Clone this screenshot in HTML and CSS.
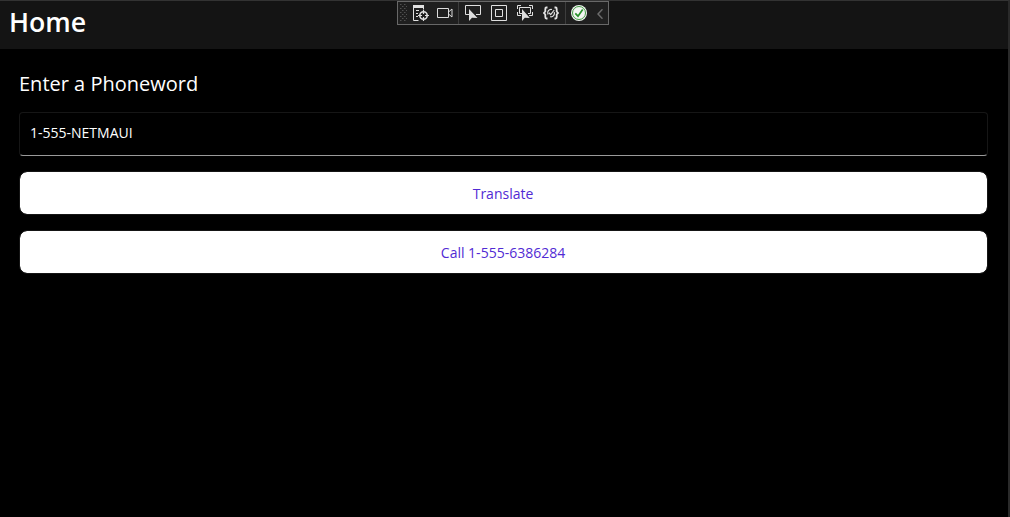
FILE: index.html
```html
<!DOCTYPE html>
<html lang="en">
<head>
<meta charset="utf-8">
<title>Home</title>
<link rel="stylesheet" href="styles.css">
</head>
<body>
<div class="window">
  <header class="titlebar"><h1>Home</h1></header>
  <main class="content">
    <label class="prompt" for="phoneword">Enter a Phoneword</label>
    <div class="entry" id="phoneword">1-555-NETMAUI</div>
    <button class="button">Translate</button>
    <button class="button">Call 1-555-6386284</button>
  </main>
  <div class="debugbar">
    <svg class="grip" width="7" height="18" viewBox="0 0 7 18"><g stroke="#505050" stroke-dasharray="1.5 2.5"><path d="M0 .5h7M0 4.500h7M0 8.500h7M0 12.500h7M0 16.500h7"/><path d="M2 2.500h5M2 6.500h5M2 10.500h5M2 14.500h5"/></g></svg>
    <svg class="icon tree" viewBox="0 0 16 16"><path fill="#e0e0e0" d="M0 0h11v3H0z"/><path d="M.5 3v12.500h5M10.500 3v1.500M3 5.500h3M3 8.500h2M3 11.500h2" fill="none" stroke="#e0e0e0"/><circle cx="10.500" cy="10.500" r="3.700" fill="none" stroke="#e0e0e0" stroke-width="1.600"/><path d="M10.500 5v4M10.500 12v4M5 10.500h4M12 10.500h4" stroke="#e0e0e0" stroke-width="1.200"/></svg>
    <svg class="icon camera" viewBox="0 0 16 16"><path d="M.5 3.500h11v9H.500zM11.500 7l3.500-3v8l-3.500-3" fill="none" stroke="#dcdcdc"/></svg>
    <i class="divider"></i>
    <svg class="icon select" viewBox="0 0 16 16"><path d="M4 9.500H.500v-9h15v9H11" fill="none" stroke="#e0e0e0"/><path fill="#dedede" d="M4 4v12l3-3.200 5.500.2z"/></svg>
    <svg class="icon layout" viewBox="0 0 16 16"><path d="M.5.500h15v15H.500zM4.500 4.500h7v7h-7z" fill="none" stroke="#e0e0e0"/></svg>
    <svg class="icon focus" viewBox="0 0 16 16"><path d="M.5 4V.500H4M12 .500h3.500V4M.500 7v3.500H4M12 10.500h3.500V7M5 8.500H2.500v-6h11v6H11" fill="none" stroke="#e0e0e0"/><path fill="#dedede" d="M5 4v12l2.800-3.200 5 .2z"/></svg>
    <svg class="icon reload" viewBox="0 0 16 16"><path d="M4.500 2.500H3.300Q2.300 2.500 2.300 4v2.500L1 8l1.300 1.500V12q0 1.500 1 1.500h1.200M11.500 2.500h1.200q1 0 1 1.500v2.500L15 8l-1.300 1.500V12q0 1.500-1 1.500h-1.200" fill="none" stroke="#e4e4e4" stroke-width="1.800"/><path d="M5 9.500a3.500 3.500 0 0 1 4-5M11.200 7a3.500 3.500 0 0 1-4 4.700M5.800 7.800l1.900 1.700L11.200 5" fill="none" stroke="#e0e0e0" stroke-width="1.200"/></svg>
    <i class="divider"></i>
    <svg class="icon status" viewBox="0 0 16 16"><circle cx="8" cy="8" r="8" fill="#eef4ee"/><circle cx="8" cy="8" r="6.500" fill="#f4f7f4" stroke="#459b45" stroke-width="1"/><path d="M4.300 8.300l2.700 2.900 4.700-6.700" fill="none" stroke="#28922a" stroke-width="1.700"/></svg>
    <svg class="chevron" viewBox="0 0 6 10"><path d="M5.500.300L1 5l4.500 4.700" fill="none" stroke="#6c6c6c" stroke-width="1.500"/></svg>
  </div>
</div>
</body>
</html>
```
FILE: styles.css
```css
* { box-sizing: border-box; }
body { margin: 0; background: #000; }
.window {
  position: relative;
  height: 517px;
  border-top: 1px solid #333;
  border-right: 2px solid #2a2a2a;
  color: #fff;
  font-family: "Open Sans", "Noto Sans", sans-serif;
  overflow: hidden;
}
.titlebar { height: 48px; padding: 2px 9px; background: #141414; }
h1 { margin: 0; font-size: 26.7px; line-height: 38px; font-weight: 600; }
.content { display: flex; flex-direction: column; padding: 21px 20px 0 19px; }
.prompt { font-size: 20px; line-height: 28px; margin-bottom: 14px; }
.entry {
  height: 44px;
  margin-bottom: 15px;
  padding: 0 10px;
  border: 1px solid #161616;
  border-bottom-color: #9a9a9a;
  border-radius: 4px;
  font-size: 14px;
  line-height: 39px;
}
.button {
  height: 44px;
  margin: 0 0 15px;
  padding: 2px 1px 0 0;
  border: 1px solid #151515;
  border-radius: 8px;
  background: #fff;
  background-clip: padding-box;
  color: #512bd4;
  font: 14px/40px "Open Sans", "Noto Sans", sans-serif;
}
.debugbar {
  position: absolute;
  left: 397px;
  top: 0;
  width: 212px;
  height: 24px;
  display: flex;
  align-items: center;
  padding-left: 2px;
  border: 1px solid #686868;
  background: #1f1f1f;
}
.debugbar svg { flex: none; }
.icon { width: 16px; height: 16px; }
.tree { margin-left: 6px; }
.camera { margin-left: 8px; }
.divider { width: 1px; height: 22px; background: #3d3d3d; }
.camera + .divider { margin-left: 5px; }
.select { margin-left: 6px; }
.layout, .focus, .reload { margin-left: 10px; }
.reload + .divider { margin-left: 6px; }
.status { margin-left: 5px; }
.chevron { width: 6px; height: 10px; margin: 2px 0 0 10px; }
```
